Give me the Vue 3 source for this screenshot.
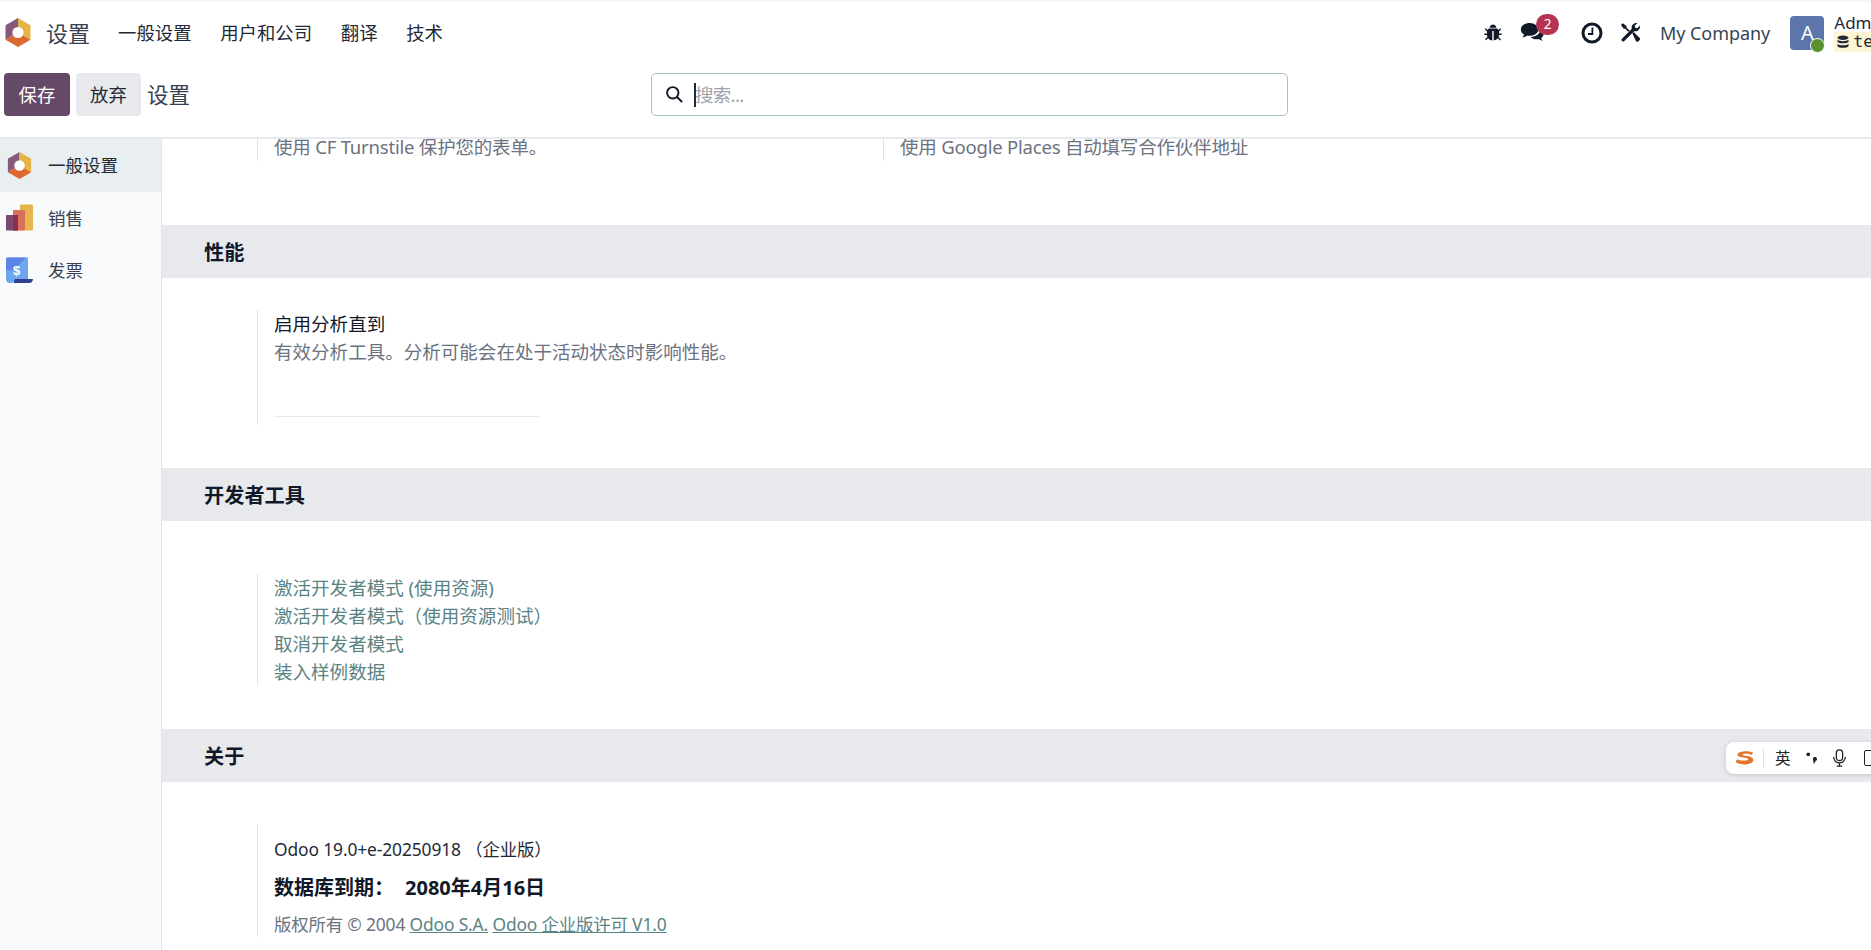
<script setup>
const navItems = ['一般设置', '用户和公司', '翻译', '技术']
const devLinks = ['激活开发者模式 (使用资源)', '激活开发者模式（使用资源测试）', '取消开发者模式', '装入样例数据']
</script>

<template>
  <div class="page">
    <header class="nav">
      <svg class="logo" viewBox="0 0 26 29">
        <path d="M13 0 L0.5 7.2 V21.8 L13 14.5Z" fill="#875a7b" />
        <path d="M13 0 L25.5 7.2 V21.8 L13 14.5Z" fill="#e5b445" />
        <path d="M0.5 21.8 L13 29 L25.5 21.8 L13 14.5Z" fill="#dc6a2e" />
        <circle cx="13" cy="14.5" r="5.6" fill="#fff" />
      </svg>
      <span class="brand">设置</span>
      <nav class="menu"><span v-for="item in navItems" :key="item">{{ item }}</span></nav>
      <div class="systray">
        <svg class="i-bug" viewBox="0 0 18 18"><path fill="#111827" d="M5.6 4.2 C6 2 7.5 1 9 1 s3 1 3.4 3.2Z M5 5 h8 a1 1 0 0 1 .9.7 L14.6 6.4 16.2 4.8 17.2 5.8 15 8 v2 h2.6 v1.5 H15 a6 6 0 0 1-.4 2 l2.4 2.4-1 1-2.1-2.1 A5.6 5.6 0 0 1 9.7 17 V7.5 H8.3 V17 A5.6 5.6 0 0 1 4.1 14.7 L2 16.8l-1-1 2.4-2.4 a6 6 0 0 1-.4-2 H.4 V10 H3 V8 L.8 5.8 1.8 4.8 3.4 6.4 4.1 5.7 A1 1 0 0 1 5 5Z"/></svg>
        <div class="chat">
          <svg viewBox="0 0 26 22"><path fill="#111827" d="M10 1 C4.8 1 .8 4 .8 7.8 c0 2.2 1.3 4.1 3.4 5.3 -.4 1.2-1.2 2.3-2.2 3.2 2.2-.2 4.1-1 5.5-2.1 .8.1 1.6.2 2.5.2 5.1 0 9.2-3 9.2-6.6 S15.1 1 10 1Z"/><path fill="#111827" d="M21.3 7.6 c0 4.7-4.8 8-10.3 8.1 1.4 1.5 3.7 2.4 6.2 2.4 .7 0 1.3-.1 2-.2 1.2.9 2.8 1.6 4.6 1.8-.8-.8-1.4-1.7-1.8-2.8 1.6-1.1 2.6-2.6 2.6-4.4 0-2-1.3-3.8-3.3-4.9Z"/></svg>
          <span class="badge">2</span>
        </div>
        <svg class="i-clock" viewBox="0 0 22 22"><circle cx="11" cy="11" r="9" fill="none" stroke="#111827" stroke-width="3"/><path d="M11.4 5.5 V12 H7" fill="none" stroke="#111827" stroke-width="1.8"/></svg>
        <svg class="i-tools" viewBox="0 0 22 22"><path fill="#111827" d="M1 3.2 3 1.2 6.8 4.2 V5.8 L10 9 8.7 10.3 5.5 7.1 H3.9Z M13 12 14.4 10.6 20.4 16.6 C21.2 17.4 21.2 18.4 20.4 19.2 L19.4 20.2 C18.6 21 17.6 21 16.8 20.2Z M2.1 17.5 12.4 7.2 C11.6 3.8 14 1 17.4 1 H18.2 L15.4 3.9 15.9 6 18 6.5 20.9 3.7 V4.6 C20.9 8 18.2 10.3 14.8 9.6 L4.5 19.9 C3.8 20.6 2.8 20.6 2.1 19.9 C1.4 19.2 1.4 18.2 2.1 17.5Z"/></svg>
        <span class="company">My Company</span>
        <div class="avatar">A<span class="dot"></span></div>
        <div class="user">
          <div class="uname">Admin</div>
          <div class="dbname">
            <svg viewBox="0 0 12 14"><ellipse cx="6" cy="2.8" rx="5.5" ry="2.2" fill="#1f2937"/><path fill="#1f2937" d="M.5 4.8 C2 6.6 10 6.6 11.5 4.8 V7 C10 8.8 2 8.8 .5 7Z M.5 9 C2 10.8 10 10.8 11.5 9 V11.2 C10 13.4 2 13.4 .5 11.2Z"/></svg>
            <span>test</span>
          </div>
        </div>
      </div>
    </header>

    <div class="panel">
      <div class="actions">
        <button class="btn primary">保存</button>
        <button class="btn secondary">放弃</button>
        <span class="panel-title">设置</span>
      </div>
      <div class="search">
        <svg viewBox="0 0 20 20"><circle cx="8.2" cy="8.2" r="6" fill="none" stroke="#111827" stroke-width="2"/><path d="M12.6 12.6 L18 18" stroke="#111827" stroke-width="2.2"/></svg>
        <span class="caret"></span>
        <span class="placeholder">搜索...</span>
      </div>
    </div>

    <div class="body">
      <aside class="side">
        <div class="side-item active">
          <svg class="side-icon" viewBox="0 0 26 29">
            <path d="M13 0 L0.5 7.2 V21.8 L13 14.5Z" fill="#875a7b" />
            <path d="M13 0 L25.5 7.2 V21.8 L13 14.5Z" fill="#e5b445" />
            <path d="M0.5 21.8 L13 29 L25.5 21.8 L13 14.5Z" fill="#dc6a2e" />
            <circle cx="13" cy="14.5" r="5.6" fill="#fff" />
          </svg>
          <span>一般设置</span>
        </div>
        <div class="side-item">
          <svg class="side-icon" viewBox="0 0 27 27">
            <rect x="14" y="0.5" width="13" height="26" rx="1" fill="#e6b54b"/>
            <rect x="7" y="6" width="12" height="20.5" rx="1" fill="#d9705c"/>
            <rect x="0" y="11" width="12" height="15.5" rx="1" fill="#7b4a72"/>
            <rect x="7" y="11" width="5" height="15.5" fill="#8d2f45"/>
          </svg>
          <span>销售</span>
        </div>
        <div class="side-item">
          <svg class="side-icon" viewBox="0 0 27 27">
            <path d="M8 22 H27 C26.6 25 25 26 23 26 H8Z" fill="#2e3f94"/>
            <path d="M2 0.5 H22 V22 H9 L7 26 H4 C1.5 26 0 24.5 0 22 V2.5 C0 1 1 .5 2 .5Z" fill="#6ea6ee"/>
            <path d="M2 .5 H20 L8 13 0 13 V2.5 C0 1 1 .5 2 .5Z" fill="#5b84e4"/>
            <text x="10.5" y="18" text-anchor="middle" class="dollar">$</text>
          </svg>
          <span>发票</span>
        </div>
      </aside>

      <main class="content">
        <div class="scroll">
          <div class="top-row">
            <div class="setting"><span class="muted tight">使用 CF Turnstile 保护您的表单。</span></div>
            <div class="setting"><span class="muted tight">使用 Google Places 自动填写合作伙伴地址</span></div>
          </div>

          <h2 class="section-title">性能</h2>
          <section class="block perf">
            <div class="setting perf-setting">
              <div class="label">启用分析直到</div>
              <div class="muted">有效分析工具。分析可能会在处于活动状态时影响性能。</div>
              <div class="rule"></div>
            </div>
          </section>

          <h2 class="section-title">开发者工具</h2>
          <section class="block dev">
            <div class="setting links">
              <a v-for="l in devLinks" :key="l" class="link">{{ l }}</a>
            </div>
          </section>

          <h2 class="section-title">关于</h2>
          <section class="block about">
            <div class="setting about-setting">
              <div class="version">Odoo 19.0+e-20250918 （企业版）</div>
              <div class="expiry"><span>数据库到期：</span><span>2080年4月16日</span></div>
              <div class="muted copy">版权所有 © 2004 <a class="under">Odoo S.A.</a> <a class="under">Odoo 企业版许可 V1.0</a></div>
            </div>
          </section>
        </div>
      </main>
    </div>

    <div class="ime">
      <svg class="ime-logo" viewBox="0 0 20 16"><path d="M18 2.5 C12 .5 4 1 2.5 4.2 C1.5 7 7 7.5 11 8 C15 8.6 13.5 10.8 8 10.6 C6 10.5 3.5 10 1.5 9.5 L1 12.5 C6 15 16 15.5 18 11 C19.5 7 13 6 9 5.6 C6 5.2 7.5 3.8 11 3.8 C13.5 3.8 15.5 4.3 17 5Z" fill="#e2762a"/></svg>
      <span class="ime-sep"></span>
      <span class="ime-zh">英</span>
      <svg class="ime-punct" viewBox="0 0 14 16"><circle cx="3.5" cy="3.5" r="2" fill="#222"/><path d="M8.5 8.5 a2.2 2.2 0 1 1 3.2 2 L9.5 14 Z" fill="#222"/></svg>
      <svg class="ime-mic" viewBox="0 0 16 20"><rect x="4.5" y="1" width="7" height="12" rx="3.5" fill="none" stroke="#222" stroke-width="1.4"/><path d="M1.5 9 a6.5 6.5 0 0 0 13 0 M8 15.5 V19 M5 19 H11" fill="none" stroke="#222" stroke-width="1.4"/></svg>
      <span class="ime-box"></span>
    </div>
  </div>
</template>

<style>
html, body { margin: 0; overflow: hidden; background: #fff; }
</style>

<style scoped>
.page {
  position: relative;
  width: 1871px;
  height: 950px;
  overflow: hidden;
  display: flex;
  flex-direction: column;
  font-family: "Noto Sans", "Noto Sans CJK SC", sans-serif;
  font-size: 18.4px;
  line-height: 28px;
  color: #374151;
  background: #fff;
}
.nav {
  height: 63px;
  flex: none;
  display: flex;
  align-items: center;
  padding-left: 5px;
  box-sizing: border-box;
  border-top: 2px solid #f6f6f7;
}
.logo { width: 26px; height: 29px; margin-right: 15px; flex: none; }
.brand { font-size: 22px; color: #374151; margin-right: 28px; }
.menu { display: flex; gap: 28.6px; color: #1f2937; }
.systray { margin-left: auto; display: flex; align-items: center; width: 387px; flex: none; }
.systray > * { flex: none; }
.i-bug { width: 18px; height: 19px; }
.chat { position: relative; width: 25px; height: 22px; margin-left: 18px; }
.chat svg { width: 25px; height: 21px; display: block; }
.badge {
  position: absolute;
  left: 16px;
  top: -8px;
  width: 23px;
  height: 21px;
  border-radius: 11px;
  background: #b5344f;
  color: #fff;
  font-size: 13.5px;
  line-height: 21px;
  text-align: center;
}
.i-clock { width: 22px; height: 22px; margin-left: 36px; }
.i-tools { width: 21px; height: 21px; margin-left: 17px; }
.company { margin-left: 19px; color: #374151; white-space: nowrap; font-size: 18px; letter-spacing: -0.05px; }
.avatar {
  position: relative;
  width: 34px;
  height: 34px;
  margin-left: 20px;
  border-radius: 4px;
  background: #5c75ab;
  color: #fff;
  text-align: center;
  font-size: 20px;
  line-height: 34px;
}
.dot {
  position: absolute;
  right: -1px;
  bottom: -3px;
  width: 15px;
  height: 15px;
  border-radius: 50%;
  background: #5a9130;
  border: 1px solid #fff;
  box-sizing: border-box;
}
.user { margin-left: 10px; width: 90px; }
.uname { font-size: 17px; line-height: 19px; color: #1f2937; white-space: nowrap; }
.dbname {
  display: flex;
  align-items: center;
  gap: 4px;
  height: 20px;
  background: #fdf6d4;
  padding-left: 3px;
  font-family: "DejaVu Sans Mono", monospace;
  font-size: 16.5px;
  line-height: 20px;
  color: #1f2937;
}
.dbname svg { width: 12px; height: 14px; flex: none; }
.panel {
  height: 76px;
  flex: none;
  position: relative;
  box-sizing: border-box;
  border-bottom: 2px solid #e7e9ed;
  display: flex;
  align-items: flex-start;
  padding-left: 4px;
}
.actions { display: flex; align-items: center; gap: 6px; padding-top: 10px; }
.btn {
  width: 66px;
  height: 43px;
  border: none;
  border-radius: 4px;
  font: inherit;
  padding: 0;
}
.primary { background: #654a68; color: #fff; }
.secondary { background: #e7e9ed; color: #1f2937; width: 65px; }
.panel-title { font-size: 21.5px; margin-left: 0; color: #374151; }
.search {
  margin-left: 461px;
  margin-top: 10px;
  width: 637px;
  height: 43px;
  box-sizing: border-box;
  border: 1px solid #a3c4c6;
  border-radius: 5px;
  display: flex;
  align-items: center;
  padding-left: 13px;
}
.search svg { width: 19px; height: 19px; flex: none; }
.caret { width: 2px; height: 24px; background: #1f2937; margin-left: 10px; flex: none; }
.placeholder { color: #9ca3af; margin-left: -1px; letter-spacing: -0.6px; }
.body { flex: 1; display: flex; min-height: 0; }
.side {
  width: 162px;
  flex: none;
  box-sizing: border-box;
  background: #f9fafb;
  border-right: 1px solid #e3e5e9;
}
.side-item {
  height: 52.6px;
  box-sizing: border-box;
  display: flex;
  align-items: center;
  padding-left: 6px;
  color: #374151;
  font-size: 17.5px;
}
.side-item.active { background: #e9eff1; color: #1f2937; }
.side-icon { width: 27px; height: 27px; margin-right: 15px; flex: none; }
.dollar { font: bold 13px "Liberation Sans", sans-serif; fill: #fff; }
.content { flex: 1; overflow: hidden; min-width: 0; font-size: 18.55px; }
.scroll { margin-top: -6px; }
.top-row { display: flex; padding: 0 0 64px 95px; height: 28px; }
.top-row .setting { width: 626px; flex: none; }
.tight { letter-spacing: -0.22px; }
.setting {
  border-left: 1px solid #dee1e5;
  padding-left: 16px;
  box-sizing: border-box;
}
.muted { color: #6b7280; }
.section-title {
  margin: 0;
  height: 53px;
  background: #e7e9ed;
  color: #111827;
  font-size: 20.2px;
  font-weight: 700;
  line-height: 55px;
  padding-left: 42px;
}
.block { padding-left: 95px; box-sizing: border-box; }
.perf { height: 190px; padding-top: 32px; }
.perf-setting { height: 115px; width: 626px; }
.label { color: #111827; }
.rule { width: 265px; height: 1px; background: #e7e9ed; margin-top: 50px; }
.dev { height: 208px; padding-top: 53px; }
.links { display: flex; flex-direction: column; height: 111px; }
.link { color: #5a8384; line-height: 27.9px; }
.about { padding-top: 43px; }
.about-setting { height: 112px; padding-top: 10px; }
.version { color: #1f2937; font-size: 17.4px; letter-spacing: -0.12px; }
.expiry { display: flex; gap: 11px; font-size: 20px; font-weight: 700; color: #111827; line-height: 30px; margin-top: 10px; }
.copy { margin-top: 7px; font-size: 17.4px; letter-spacing: -0.15px; }
.under { color: #5a8384; text-decoration: underline; }
.ime {
  position: absolute;
  left: 1726px;
  top: 742px;
  width: 160px;
  height: 32px;
  background: #fff;
  border-radius: 8px;
  box-shadow: 0 1px 5px rgba(0, 0, 0, 0.14);
  display: flex;
  align-items: center;
  color: #222;
}
.ime-logo { width: 20px; height: 16px; margin-left: 9px; }
.ime-sep { width: 1px; height: 19px; background: #ddd; margin-left: 8px; }
.ime-zh { font-size: 15.5px; margin-left: 11px; }
.ime-punct { width: 13px; height: 15px; margin-left: 14px; }
.ime-mic { width: 15px; height: 18px; margin-left: 14px; }
.ime-box { width: 8px; height: 14px; border: 1.5px solid #222; border-radius: 2px; margin-left: 17px; }
</style>
